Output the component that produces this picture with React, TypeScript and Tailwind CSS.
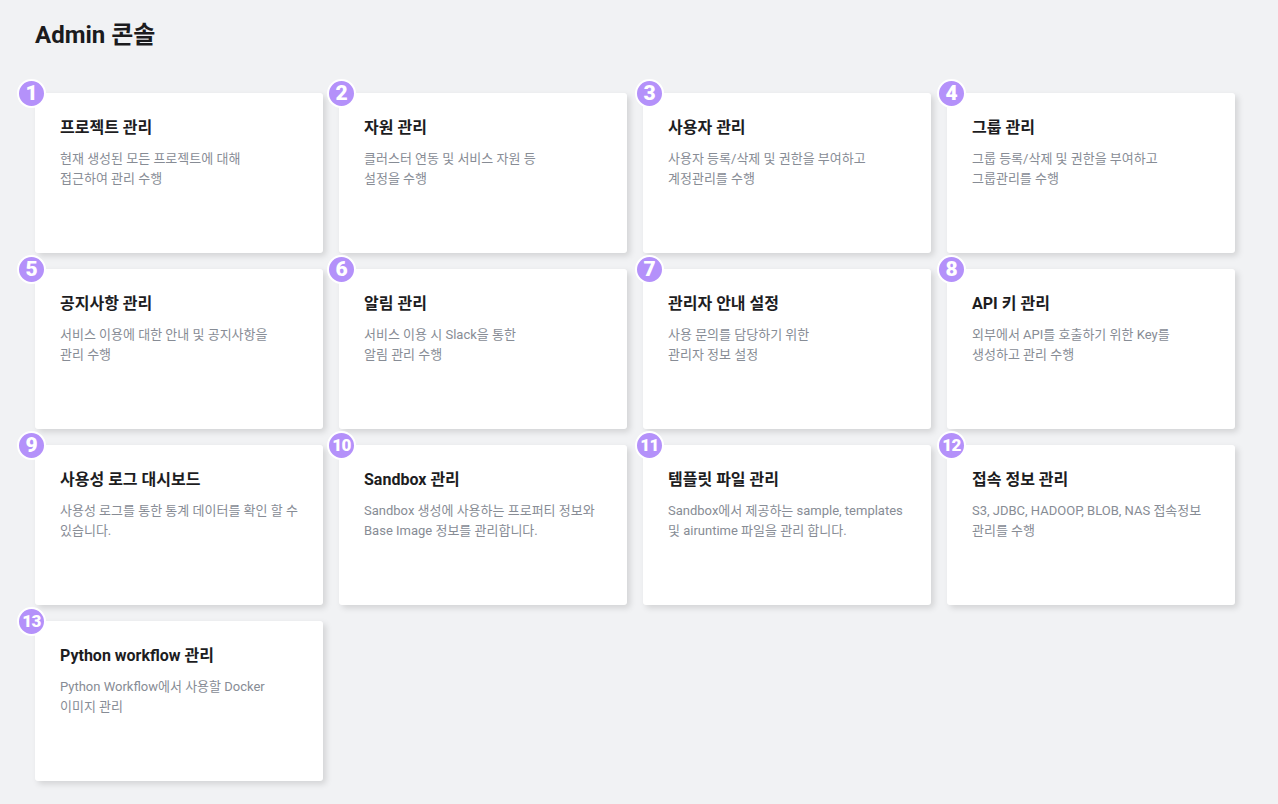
import React from 'react';

interface MenuItem {
    title: string;
    lines: string[];
}

const items: MenuItem[] = [
    { title: '프로젝트 관리', lines: ['현재 생성된 모든 프로젝트에 대해', '접근하여 관리 수행'] },
    { title: '자원 관리', lines: ['클러스터 연동 및 서비스 자원 등', '설정을 수행'] },
    { title: '사용자 관리', lines: ['사용자 등록/삭제 및 권한을 부여하고', '계정관리를 수행'] },
    { title: '그룹 관리', lines: ['그룹 등록/삭제 및 권한을 부여하고', '그룹관리를 수행'] },
    { title: '공지사항 관리', lines: ['서비스 이용에 대한 안내 및 공지사항을', '관리 수행'] },
    { title: '알림 관리', lines: ['서비스 이용 시 Slack을 통한', '알림 관리 수행'] },
    { title: '관리자 안내 설정', lines: ['사용 문의를 담당하기 위한', '관리자 정보 설정'] },
    { title: 'API 키 관리', lines: ['외부에서 API를 호출하기 위한 Key를', '생성하고 관리 수행'] },
    { title: '사용성 로그 대시보드', lines: ['사용성 로그를 통한 통계 데이터를 확인 할 수', '있습니다.'] },
    { title: 'Sandbox 관리', lines: ['Sandbox 생성에 사용하는 프로퍼티 정보와', 'Base Image 정보를 관리합니다.'] },
    { title: '템플릿 파일 관리', lines: ['Sandbox에서 제공하는 sample, templates', '및 airuntime 파일을 관리 합니다.'] },
    { title: '접속 정보 관리', lines: ['S3, JDBC, HADOOP, BLOB, NAS 접속정보', '관리를 수행'] },
    { title: 'Python workflow 관리', lines: ['Python Workflow에서 사용할 Docker', '이미지 관리'] },
];

// badge offset differs slightly per column in the original
const badgeLeft = ['-left-[18px]', '-left-[12px]', '-left-[8px]', '-left-[10px]'];

const AdminCard: React.FC<{ item: MenuItem; index: number }> = ({ item, index }) => {
    const num = index + 1;
    return (
        <div className="relative h-[160px] bg-white rounded-[3px] shadow-[3px_3px_6px_rgba(0,0,0,0.13)] pt-[24px] pl-[25px] pr-4">
            <div className={`absolute ${badgeLeft[index % 4]} -top-[14px] w-[29px] h-[29px] rounded-full bg-[#b491fa] border-2 border-white flex items-center justify-center`}>
                <span className={`text-white font-black leading-none ${num > 9 ? 'text-[17px] tracking-[-0.5px]' : 'text-[21px]'}`}>{num}</span>
            </div>
            <h3 className="text-[16px] leading-[22px] font-bold text-[#1d1d1f]">{item.title}</h3>
            <p className="mt-[10px] text-[13px] leading-[20px] text-[#878c95]">
                {item.lines[0]}
                <br />
                {item.lines[1]}
            </p>
        </div>
    );
};

export default function App() {
    return (
        <div
            className="min-h-[804px] bg-[#f1f2f4] pt-[18px] px-[35px] pb-6"
            style={{ fontFamily: 'Roboto, "Noto Sans CJK KR", "Noto Sans", sans-serif' }}
        >
            <h1 className="text-[24px] leading-[34px] font-bold text-[#1b1b1d]">Admin 콘솔</h1>
            <div className="mt-[41px] grid grid-cols-[repeat(4,288px)] gap-4">
                {items.map((item, i) => (
                    <AdminCard key={item.title} item={item} index={i} />
                ))}
            </div>
        </div>
    );
}
